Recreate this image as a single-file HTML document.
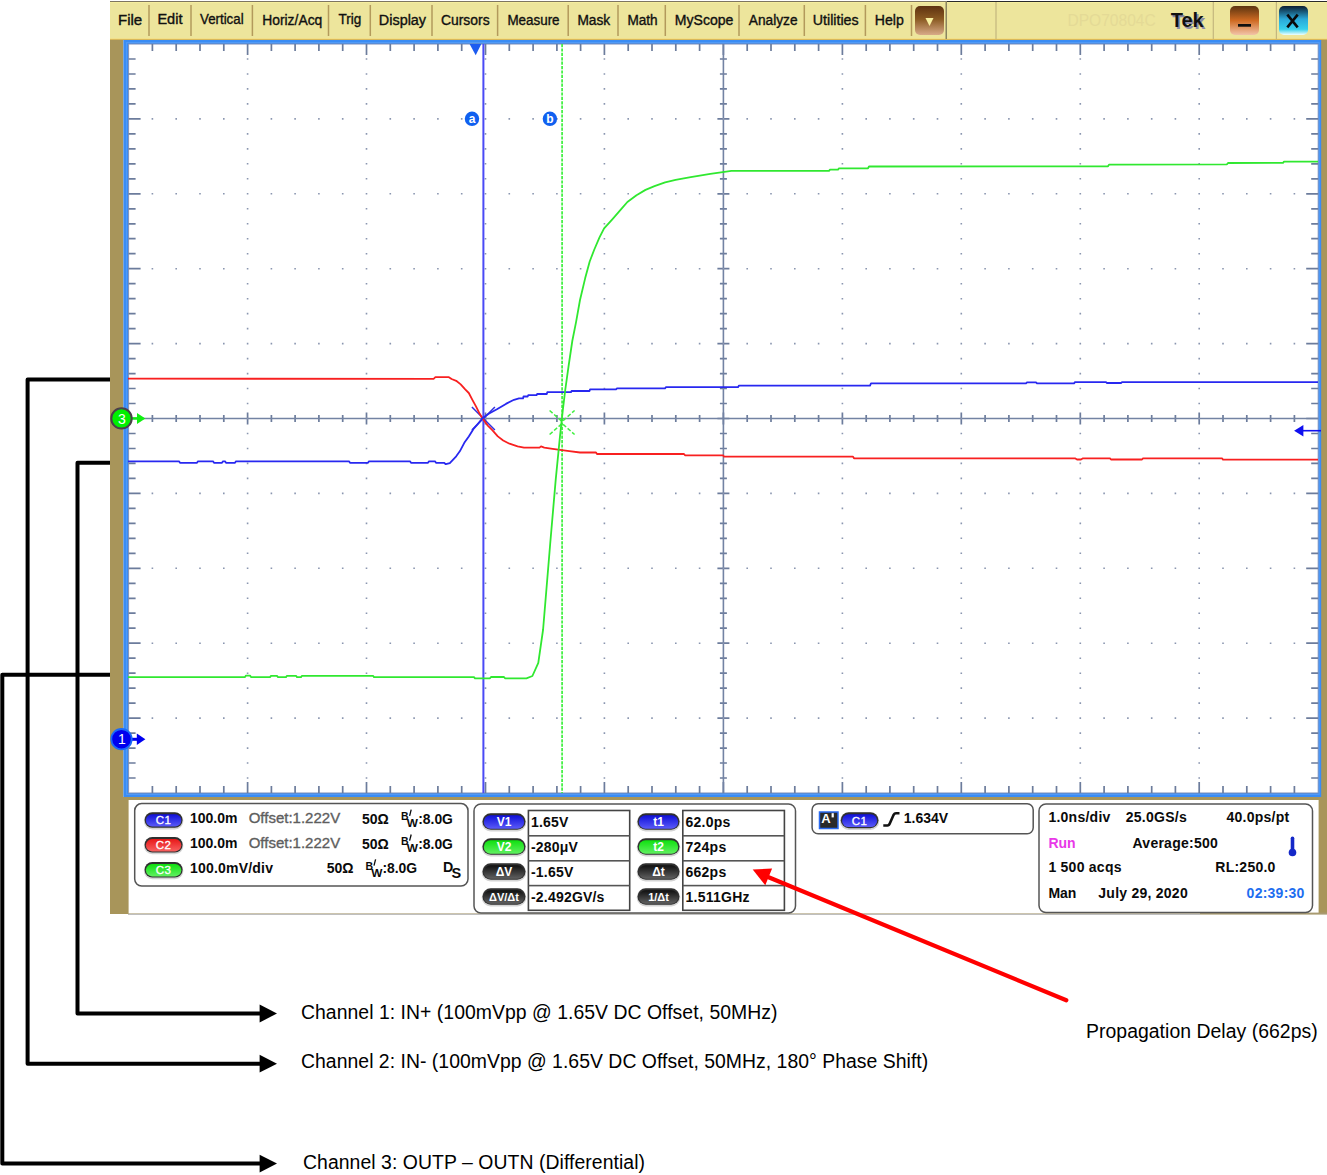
<!DOCTYPE html>
<html><head><meta charset="utf-8"><style>
html,body{margin:0;padding:0;background:#fff;width:1327px;height:1175px;overflow:hidden}
svg{display:block;font-family:"Liberation Sans", sans-serif}
</style></head><body>
<svg width="1327" height="1175" viewBox="0 0 1327 1175">
<rect x="110" y="1" width="1217" height="913" fill="#ffffff"/>
<rect x="110" y="1" width="836" height="1" fill="#7d7560"/><rect x="946" y="1" width="381" height="1.3" fill="#2a2a2a"/>
<rect x="110" y="2" width="1217" height="37" fill="#ede59c"/>
<rect x="110" y="2" width="1217" height="1" fill="#f6ee9e"/>
<rect x="110" y="38" width="1217" height="1" fill="#f2e08a"/>
<rect x="110" y="39" width="1217" height="1" fill="#d9b85a"/>
<rect x="110" y="40" width="13.4" height="874" fill="#a8955a"/>
<rect x="1321" y="40" width="6" height="874" fill="#a8955a"/>
<rect x="110" y="797" width="1217" height="117" fill="#a8955a"/>
<rect x="128.6" y="800" width="1190" height="113.5" fill="#ffffff"/>
<rect x="128" y="913.8" width="1072" height="1" fill="#b0b0b0"/><rect x="1200" y="912.6" width="127" height="2" fill="#a89a70"/>
<rect x="123.4" y="40" width="1197.8" height="757" fill="#3a8cf4"/>
<rect x="128" y="44" width="1190.2" height="749" fill="#ffffff"/>
<rect x="128.6" y="44" width="1189.6" height="749" fill="none" stroke="#7a8cb8" stroke-width="1"/>
<rect x="126.6" y="42.6" width="1192.6" height="751.8" fill="none" stroke="#5ea2f8" stroke-width="1" opacity="0.7"/>
<rect x="995.40" y="2" width="1.2" height="37" fill="#c4b67e"/>
<rect x="1212.70" y="2" width="1.2" height="37" fill="#c4b67e"/>
<rect x="1275.80" y="2" width="1.2" height="37" fill="#c4b67e"/>
<rect x="148.25" y="5" width="1.5" height="31" fill="#b39a5c"/>
<rect x="190.25" y="5" width="1.5" height="31" fill="#b39a5c"/>
<rect x="251.65" y="5" width="1.5" height="31" fill="#b39a5c"/>
<rect x="327.75" y="5" width="1.5" height="31" fill="#b39a5c"/>
<rect x="369.55" y="5" width="1.5" height="31" fill="#b39a5c"/>
<rect x="431.25" y="5" width="1.5" height="31" fill="#b39a5c"/>
<rect x="496.85" y="5" width="1.5" height="31" fill="#b39a5c"/>
<rect x="567.45" y="5" width="1.5" height="31" fill="#b39a5c"/>
<rect x="617.25" y="5" width="1.5" height="31" fill="#b39a5c"/>
<rect x="664.55" y="5" width="1.5" height="31" fill="#b39a5c"/>
<rect x="738.25" y="5" width="1.5" height="31" fill="#b39a5c"/>
<rect x="803.55" y="5" width="1.5" height="31" fill="#b39a5c"/>
<rect x="864.65" y="5" width="1.5" height="31" fill="#b39a5c"/>
<rect x="910.75" y="5" width="1.5" height="31" fill="#b39a5c"/>
<rect x="945.5" y="1" width="1.5" height="38" fill="#8a8460"/>
<text x="118.0" y="25.3" font-size="13.8" fill="#101010" stroke="#101010" stroke-width="0.35" textLength="24.2" lengthAdjust="spacingAndGlyphs">File</text>
<text x="157.4" y="24.3" font-size="13.8" fill="#101010" stroke="#101010" stroke-width="0.35" textLength="25.099999999999998" lengthAdjust="spacingAndGlyphs">Edit</text>
<text x="200.0" y="24.3" font-size="13.8" fill="#101010" stroke="#101010" stroke-width="0.35" textLength="43.6" lengthAdjust="spacingAndGlyphs">Vertical</text>
<text x="262.2" y="25.3" font-size="13.8" fill="#101010" stroke="#101010" stroke-width="0.35" textLength="60.1" lengthAdjust="spacingAndGlyphs">Horiz/Acq</text>
<text x="338.4" y="24.3" font-size="13.8" fill="#101010" stroke="#101010" stroke-width="0.35" textLength="22.8" lengthAdjust="spacingAndGlyphs">Trig</text>
<text x="378.79999999999995" y="25.3" font-size="13.8" fill="#101010" stroke="#101010" stroke-width="0.35" textLength="47.300000000000004" lengthAdjust="spacingAndGlyphs">Display</text>
<text x="440.9" y="25.3" font-size="13.8" fill="#101010" stroke="#101010" stroke-width="0.35" textLength="48.7" lengthAdjust="spacingAndGlyphs">Cursors</text>
<text x="507.4" y="25.3" font-size="13.8" fill="#101010" stroke="#101010" stroke-width="0.35" textLength="52.2" lengthAdjust="spacingAndGlyphs">Measure</text>
<text x="577.4" y="25.3" font-size="13.8" fill="#101010" stroke="#101010" stroke-width="0.35" textLength="32.800000000000004" lengthAdjust="spacingAndGlyphs">Mask</text>
<text x="627.4" y="25.3" font-size="13.8" fill="#101010" stroke="#101010" stroke-width="0.35" textLength="30.2" lengthAdjust="spacingAndGlyphs">Math</text>
<text x="674.8" y="25.3" font-size="13.8" fill="#101010" stroke="#101010" stroke-width="0.35" textLength="58.6" lengthAdjust="spacingAndGlyphs">MyScope</text>
<text x="748.8" y="25.3" font-size="13.8" fill="#101010" stroke="#101010" stroke-width="0.35" textLength="48.7" lengthAdjust="spacingAndGlyphs">Analyze</text>
<text x="812.8" y="25.3" font-size="13.8" fill="#101010" stroke="#101010" stroke-width="0.35" textLength="45.800000000000004" lengthAdjust="spacingAndGlyphs">Utilities</text>
<text x="874.8" y="25.3" font-size="13.8" fill="#101010" stroke="#101010" stroke-width="0.35" textLength="29.0" lengthAdjust="spacingAndGlyphs">Help</text>
<defs><linearGradient id="gdrop" x1="0" y1="0" x2="0" y2="1"><stop offset="0" stop-color="#5e3210"/><stop offset="0.45" stop-color="#8a5a22"/><stop offset="1" stop-color="#d8aa88"/></linearGradient><linearGradient id="gmin" x1="0" y1="0" x2="0" y2="1"><stop offset="0" stop-color="#5a3410"/><stop offset="0.5" stop-color="#cf6a22"/><stop offset="1" stop-color="#f2c4a8"/></linearGradient><linearGradient id="gx" x1="0" y1="0" x2="0" y2="1"><stop offset="0" stop-color="#0c1c30"/><stop offset="0.45" stop-color="#2aa8d8"/><stop offset="0.8" stop-color="#36d0ec"/><stop offset="1" stop-color="#f0ffff"/></linearGradient><linearGradient id="gb1" x1="0" y1="0" x2="0" y2="1"><stop offset="0" stop-color="#1010d8"/><stop offset="1" stop-color="#5a5af8"/></linearGradient><linearGradient id="gb2" x1="0" y1="0" x2="0" y2="1"><stop offset="0" stop-color="#e81818"/><stop offset="1" stop-color="#f86060"/></linearGradient><linearGradient id="gb3" x1="0" y1="0" x2="0" y2="1"><stop offset="0" stop-color="#10e010"/><stop offset="1" stop-color="#60f060"/></linearGradient><linearGradient id="gbk" x1="0" y1="0" x2="0" y2="1"><stop offset="0" stop-color="#101010"/><stop offset="1" stop-color="#606060"/></linearGradient></defs>
<rect x="915" y="6" width="29" height="29" rx="5" fill="url(#gdrop)"/>
<path d="M925.5 18 L933.5 18 L929.5 26 Z" fill="#f8f0a0"/>
<text x="1067.4" y="26.4" font-size="15.6" fill="#e4da96">DPO70804C</text>
<text x="1172.3" y="28.8" font-size="20" font-weight="700" fill="#8a8aa8">Tek</text>
<text x="1170.7" y="27.3" font-size="20" font-weight="700" fill="#101010">Tek</text>
<rect x="1230" y="6" width="29" height="29" rx="5" fill="url(#gmin)"/>
<rect x="1238" y="24" width="13" height="2.7" fill="#101010"/>
<rect x="1279" y="6" width="29" height="29" rx="5" fill="url(#gx)"/>
<path d="M1287.3 14.7 L1297.7 27.3 M1297.7 14.7 L1287.3 27.3" stroke="#0a0a0a" stroke-width="2.6"/>
<path d="M152.4 44.0 v7 M152.4 793.0 v-7 M176.2 44.0 v7 M176.2 793.0 v-7 M200.0 44.0 v7 M200.0 793.0 v-7 M223.8 44.0 v7 M223.8 793.0 v-7 M247.6 44.0 v11 M247.6 793.0 v-11 M271.4 44.0 v7 M271.4 793.0 v-7 M295.1 44.0 v7 M295.1 793.0 v-7 M318.9 44.0 v7 M318.9 793.0 v-7 M342.7 44.0 v7 M342.7 793.0 v-7 M366.5 44.0 v11 M366.5 793.0 v-11 M390.3 44.0 v7 M390.3 793.0 v-7 M414.1 44.0 v7 M414.1 793.0 v-7 M437.9 44.0 v7 M437.9 793.0 v-7 M461.7 44.0 v7 M461.7 793.0 v-7 M485.5 44.0 v11 M485.5 793.0 v-11 M509.3 44.0 v7 M509.3 793.0 v-7 M533.1 44.0 v7 M533.1 793.0 v-7 M556.9 44.0 v7 M556.9 793.0 v-7 M580.6 44.0 v7 M580.6 793.0 v-7 M604.4 44.0 v11 M604.4 793.0 v-11 M628.2 44.0 v7 M628.2 793.0 v-7 M652.0 44.0 v7 M652.0 793.0 v-7 M675.8 44.0 v7 M675.8 793.0 v-7 M699.6 44.0 v7 M699.6 793.0 v-7 M723.4 44.0 v11 M723.4 793.0 v-11 M747.2 44.0 v7 M747.2 793.0 v-7 M771.0 44.0 v7 M771.0 793.0 v-7 M794.8 44.0 v7 M794.8 793.0 v-7 M818.6 44.0 v7 M818.6 793.0 v-7 M842.4 44.0 v11 M842.4 793.0 v-11 M866.2 44.0 v7 M866.2 793.0 v-7 M889.9 44.0 v7 M889.9 793.0 v-7 M913.7 44.0 v7 M913.7 793.0 v-7 M937.5 44.0 v7 M937.5 793.0 v-7 M961.3 44.0 v11 M961.3 793.0 v-11 M985.1 44.0 v7 M985.1 793.0 v-7 M1008.9 44.0 v7 M1008.9 793.0 v-7 M1032.7 44.0 v7 M1032.7 793.0 v-7 M1056.5 44.0 v7 M1056.5 793.0 v-7 M1080.3 44.0 v11 M1080.3 793.0 v-11 M1104.1 44.0 v7 M1104.1 793.0 v-7 M1127.9 44.0 v7 M1127.9 793.0 v-7 M1151.7 44.0 v7 M1151.7 793.0 v-7 M1175.4 44.0 v7 M1175.4 793.0 v-7 M1199.2 44.0 v11 M1199.2 793.0 v-11 M1223.0 44.0 v7 M1223.0 793.0 v-7 M1246.8 44.0 v7 M1246.8 793.0 v-7 M1270.6 44.0 v7 M1270.6 793.0 v-7 M1294.4 44.0 v7 M1294.4 793.0 v-7 M128.6 59.0 h7 M1318.2 59.0 h-7 M128.6 74.0 h7 M1318.2 74.0 h-7 M128.6 88.9 h7 M1318.2 88.9 h-7 M128.6 103.9 h7 M1318.2 103.9 h-7 M128.6 118.9 h12 M1318.2 118.9 h-12 M128.6 133.9 h7 M1318.2 133.9 h-7 M128.6 148.9 h7 M1318.2 148.9 h-7 M128.6 163.8 h7 M1318.2 163.8 h-7 M128.6 178.8 h7 M1318.2 178.8 h-7 M128.6 193.8 h12 M1318.2 193.8 h-12 M128.6 208.8 h7 M1318.2 208.8 h-7 M128.6 223.8 h7 M1318.2 223.8 h-7 M128.6 238.7 h7 M1318.2 238.7 h-7 M128.6 253.7 h7 M1318.2 253.7 h-7 M128.6 268.7 h12 M1318.2 268.7 h-12 M128.6 283.7 h7 M1318.2 283.7 h-7 M128.6 298.7 h7 M1318.2 298.7 h-7 M128.6 313.6 h7 M1318.2 313.6 h-7 M128.6 328.6 h7 M1318.2 328.6 h-7 M128.6 343.6 h12 M1318.2 343.6 h-12 M128.6 358.6 h7 M1318.2 358.6 h-7 M128.6 373.6 h7 M1318.2 373.6 h-7 M128.6 388.5 h7 M1318.2 388.5 h-7 M128.6 403.5 h7 M1318.2 403.5 h-7 M128.6 418.5 h12 M1318.2 418.5 h-12 M128.6 433.5 h7 M1318.2 433.5 h-7 M128.6 448.5 h7 M1318.2 448.5 h-7 M128.6 463.4 h7 M1318.2 463.4 h-7 M128.6 478.4 h7 M1318.2 478.4 h-7 M128.6 493.4 h12 M1318.2 493.4 h-12 M128.6 508.4 h7 M1318.2 508.4 h-7 M128.6 523.4 h7 M1318.2 523.4 h-7 M128.6 538.3 h7 M1318.2 538.3 h-7 M128.6 553.3 h7 M1318.2 553.3 h-7 M128.6 568.3 h12 M1318.2 568.3 h-12 M128.6 583.3 h7 M1318.2 583.3 h-7 M128.6 598.3 h7 M1318.2 598.3 h-7 M128.6 613.2 h7 M1318.2 613.2 h-7 M128.6 628.2 h7 M1318.2 628.2 h-7 M128.6 643.2 h12 M1318.2 643.2 h-12 M128.6 658.2 h7 M1318.2 658.2 h-7 M128.6 673.2 h7 M1318.2 673.2 h-7 M128.6 688.1 h7 M1318.2 688.1 h-7 M128.6 703.1 h7 M1318.2 703.1 h-7 M128.6 718.1 h12 M1318.2 718.1 h-12 M128.6 733.1 h7 M1318.2 733.1 h-7 M128.6 748.1 h7 M1318.2 748.1 h-7 M128.6 763.0 h7 M1318.2 763.0 h-7 M128.6 778.0 h7 M1318.2 778.0 h-7 M152.4 415.0 V422.0 M719.9 59.0 H726.9 M176.2 415.0 V422.0 M719.9 74.0 H726.9 M200.0 415.0 V422.0 M719.9 88.9 H726.9 M223.8 415.0 V422.0 M719.9 103.9 H726.9 M247.6 412.5 V424.5 M717.4 118.9 H729.4 M271.4 415.0 V422.0 M719.9 133.9 H726.9 M295.1 415.0 V422.0 M719.9 148.9 H726.9 M318.9 415.0 V422.0 M719.9 163.8 H726.9 M342.7 415.0 V422.0 M719.9 178.8 H726.9 M366.5 412.5 V424.5 M717.4 193.8 H729.4 M390.3 415.0 V422.0 M719.9 208.8 H726.9 M414.1 415.0 V422.0 M719.9 223.8 H726.9 M437.9 415.0 V422.0 M719.9 238.7 H726.9 M461.7 415.0 V422.0 M719.9 253.7 H726.9 M485.5 412.5 V424.5 M717.4 268.7 H729.4 M509.3 415.0 V422.0 M719.9 283.7 H726.9 M533.1 415.0 V422.0 M719.9 298.7 H726.9 M556.9 415.0 V422.0 M719.9 313.6 H726.9 M580.6 415.0 V422.0 M719.9 328.6 H726.9 M604.4 412.5 V424.5 M717.4 343.6 H729.4 M628.2 415.0 V422.0 M719.9 358.6 H726.9 M652.0 415.0 V422.0 M719.9 373.6 H726.9 M675.8 415.0 V422.0 M719.9 388.5 H726.9 M699.6 415.0 V422.0 M719.9 403.5 H726.9 M723.4 412.5 V424.5 M717.4 418.5 H729.4 M747.2 415.0 V422.0 M719.9 433.5 H726.9 M771.0 415.0 V422.0 M719.9 448.5 H726.9 M794.8 415.0 V422.0 M719.9 463.4 H726.9 M818.6 415.0 V422.0 M719.9 478.4 H726.9 M842.4 412.5 V424.5 M717.4 493.4 H729.4 M866.2 415.0 V422.0 M719.9 508.4 H726.9 M889.9 415.0 V422.0 M719.9 523.4 H726.9 M913.7 415.0 V422.0 M719.9 538.3 H726.9 M937.5 415.0 V422.0 M719.9 553.3 H726.9 M961.3 412.5 V424.5 M717.4 568.3 H729.4 M985.1 415.0 V422.0 M719.9 583.3 H726.9 M1008.9 415.0 V422.0 M719.9 598.3 H726.9 M1032.7 415.0 V422.0 M719.9 613.2 H726.9 M1056.5 415.0 V422.0 M719.9 628.2 H726.9 M1080.3 412.5 V424.5 M717.4 643.2 H729.4 M1104.1 415.0 V422.0 M719.9 658.2 H726.9 M1127.9 415.0 V422.0 M719.9 673.2 H726.9 M1151.7 415.0 V422.0 M719.9 688.1 H726.9 M1175.4 415.0 V422.0 M719.9 703.1 H726.9 M1199.2 412.5 V424.5 M717.4 718.1 H729.4 M1223.0 415.0 V422.0 M719.9 733.1 H726.9 M1246.8 415.0 V422.0 M719.9 748.1 H726.9 M1270.6 415.0 V422.0 M719.9 763.0 H726.9 M1294.4 415.0 V422.0 M719.9 778.0 H726.9" stroke="#6c7c9c" stroke-width="1.7" fill="none"/>
<path d="M128.6 418.5 H1318.2 M723.4 44.0 V793.0" stroke="#7383a3" stroke-width="1.6" fill="none"/>
<path d="M246.8 58.2h1.6v1.6h-1.6zM246.8 73.2h1.6v1.6h-1.6zM246.8 88.1h1.6v1.6h-1.6zM246.8 103.1h1.6v1.6h-1.6zM246.8 118.1h1.6v1.6h-1.6zM246.8 133.1h1.6v1.6h-1.6zM246.8 148.1h1.6v1.6h-1.6zM246.8 163.0h1.6v1.6h-1.6zM246.8 178.0h1.6v1.6h-1.6zM246.8 193.0h1.6v1.6h-1.6zM246.8 208.0h1.6v1.6h-1.6zM246.8 223.0h1.6v1.6h-1.6zM246.8 237.9h1.6v1.6h-1.6zM246.8 252.9h1.6v1.6h-1.6zM246.8 267.9h1.6v1.6h-1.6zM246.8 282.9h1.6v1.6h-1.6zM246.8 297.9h1.6v1.6h-1.6zM246.8 312.8h1.6v1.6h-1.6zM246.8 327.8h1.6v1.6h-1.6zM246.8 342.8h1.6v1.6h-1.6zM246.8 357.8h1.6v1.6h-1.6zM246.8 372.8h1.6v1.6h-1.6zM246.8 387.7h1.6v1.6h-1.6zM246.8 402.7h1.6v1.6h-1.6zM246.8 417.7h1.6v1.6h-1.6zM246.8 432.7h1.6v1.6h-1.6zM246.8 447.7h1.6v1.6h-1.6zM246.8 462.6h1.6v1.6h-1.6zM246.8 477.6h1.6v1.6h-1.6zM246.8 492.6h1.6v1.6h-1.6zM246.8 507.6h1.6v1.6h-1.6zM246.8 522.6h1.6v1.6h-1.6zM246.8 537.5h1.6v1.6h-1.6zM246.8 552.5h1.6v1.6h-1.6zM246.8 567.5h1.6v1.6h-1.6zM246.8 582.5h1.6v1.6h-1.6zM246.8 597.5h1.6v1.6h-1.6zM246.8 612.4h1.6v1.6h-1.6zM246.8 627.4h1.6v1.6h-1.6zM246.8 642.4h1.6v1.6h-1.6zM246.8 657.4h1.6v1.6h-1.6zM246.8 672.4h1.6v1.6h-1.6zM246.8 687.3h1.6v1.6h-1.6zM246.8 702.3h1.6v1.6h-1.6zM246.8 717.3h1.6v1.6h-1.6zM246.8 732.3h1.6v1.6h-1.6zM246.8 747.3h1.6v1.6h-1.6zM246.8 762.2h1.6v1.6h-1.6zM246.8 777.2h1.6v1.6h-1.6zM151.6 118.1h1.6v1.6h-1.6zM175.4 118.1h1.6v1.6h-1.6zM199.2 118.1h1.6v1.6h-1.6zM223.0 118.1h1.6v1.6h-1.6zM246.8 118.1h1.6v1.6h-1.6zM270.6 118.1h1.6v1.6h-1.6zM294.3 118.1h1.6v1.6h-1.6zM318.1 118.1h1.6v1.6h-1.6zM341.9 118.1h1.6v1.6h-1.6zM365.7 118.1h1.6v1.6h-1.6zM389.5 118.1h1.6v1.6h-1.6zM413.3 118.1h1.6v1.6h-1.6zM437.1 118.1h1.6v1.6h-1.6zM460.9 118.1h1.6v1.6h-1.6zM484.7 118.1h1.6v1.6h-1.6zM508.5 118.1h1.6v1.6h-1.6zM532.3 118.1h1.6v1.6h-1.6zM556.1 118.1h1.6v1.6h-1.6zM579.8 118.1h1.6v1.6h-1.6zM603.6 118.1h1.6v1.6h-1.6zM627.4 118.1h1.6v1.6h-1.6zM651.2 118.1h1.6v1.6h-1.6zM675.0 118.1h1.6v1.6h-1.6zM698.8 118.1h1.6v1.6h-1.6zM722.6 118.1h1.6v1.6h-1.6zM746.4 118.1h1.6v1.6h-1.6zM770.2 118.1h1.6v1.6h-1.6zM794.0 118.1h1.6v1.6h-1.6zM817.8 118.1h1.6v1.6h-1.6zM841.6 118.1h1.6v1.6h-1.6zM865.4 118.1h1.6v1.6h-1.6zM889.1 118.1h1.6v1.6h-1.6zM912.9 118.1h1.6v1.6h-1.6zM936.7 118.1h1.6v1.6h-1.6zM960.5 118.1h1.6v1.6h-1.6zM984.3 118.1h1.6v1.6h-1.6zM1008.1 118.1h1.6v1.6h-1.6zM1031.9 118.1h1.6v1.6h-1.6zM1055.7 118.1h1.6v1.6h-1.6zM1079.5 118.1h1.6v1.6h-1.6zM1103.3 118.1h1.6v1.6h-1.6zM1127.1 118.1h1.6v1.6h-1.6zM1150.9 118.1h1.6v1.6h-1.6zM1174.6 118.1h1.6v1.6h-1.6zM1198.4 118.1h1.6v1.6h-1.6zM1222.2 118.1h1.6v1.6h-1.6zM1246.0 118.1h1.6v1.6h-1.6zM1269.8 118.1h1.6v1.6h-1.6zM1293.6 118.1h1.6v1.6h-1.6zM365.7 58.2h1.6v1.6h-1.6zM365.7 73.2h1.6v1.6h-1.6zM365.7 88.1h1.6v1.6h-1.6zM365.7 103.1h1.6v1.6h-1.6zM365.7 118.1h1.6v1.6h-1.6zM365.7 133.1h1.6v1.6h-1.6zM365.7 148.1h1.6v1.6h-1.6zM365.7 163.0h1.6v1.6h-1.6zM365.7 178.0h1.6v1.6h-1.6zM365.7 193.0h1.6v1.6h-1.6zM365.7 208.0h1.6v1.6h-1.6zM365.7 223.0h1.6v1.6h-1.6zM365.7 237.9h1.6v1.6h-1.6zM365.7 252.9h1.6v1.6h-1.6zM365.7 267.9h1.6v1.6h-1.6zM365.7 282.9h1.6v1.6h-1.6zM365.7 297.9h1.6v1.6h-1.6zM365.7 312.8h1.6v1.6h-1.6zM365.7 327.8h1.6v1.6h-1.6zM365.7 342.8h1.6v1.6h-1.6zM365.7 357.8h1.6v1.6h-1.6zM365.7 372.8h1.6v1.6h-1.6zM365.7 387.7h1.6v1.6h-1.6zM365.7 402.7h1.6v1.6h-1.6zM365.7 417.7h1.6v1.6h-1.6zM365.7 432.7h1.6v1.6h-1.6zM365.7 447.7h1.6v1.6h-1.6zM365.7 462.6h1.6v1.6h-1.6zM365.7 477.6h1.6v1.6h-1.6zM365.7 492.6h1.6v1.6h-1.6zM365.7 507.6h1.6v1.6h-1.6zM365.7 522.6h1.6v1.6h-1.6zM365.7 537.5h1.6v1.6h-1.6zM365.7 552.5h1.6v1.6h-1.6zM365.7 567.5h1.6v1.6h-1.6zM365.7 582.5h1.6v1.6h-1.6zM365.7 597.5h1.6v1.6h-1.6zM365.7 612.4h1.6v1.6h-1.6zM365.7 627.4h1.6v1.6h-1.6zM365.7 642.4h1.6v1.6h-1.6zM365.7 657.4h1.6v1.6h-1.6zM365.7 672.4h1.6v1.6h-1.6zM365.7 687.3h1.6v1.6h-1.6zM365.7 702.3h1.6v1.6h-1.6zM365.7 717.3h1.6v1.6h-1.6zM365.7 732.3h1.6v1.6h-1.6zM365.7 747.3h1.6v1.6h-1.6zM365.7 762.2h1.6v1.6h-1.6zM365.7 777.2h1.6v1.6h-1.6zM151.6 193.0h1.6v1.6h-1.6zM175.4 193.0h1.6v1.6h-1.6zM199.2 193.0h1.6v1.6h-1.6zM223.0 193.0h1.6v1.6h-1.6zM246.8 193.0h1.6v1.6h-1.6zM270.6 193.0h1.6v1.6h-1.6zM294.3 193.0h1.6v1.6h-1.6zM318.1 193.0h1.6v1.6h-1.6zM341.9 193.0h1.6v1.6h-1.6zM365.7 193.0h1.6v1.6h-1.6zM389.5 193.0h1.6v1.6h-1.6zM413.3 193.0h1.6v1.6h-1.6zM437.1 193.0h1.6v1.6h-1.6zM460.9 193.0h1.6v1.6h-1.6zM484.7 193.0h1.6v1.6h-1.6zM508.5 193.0h1.6v1.6h-1.6zM532.3 193.0h1.6v1.6h-1.6zM556.1 193.0h1.6v1.6h-1.6zM579.8 193.0h1.6v1.6h-1.6zM603.6 193.0h1.6v1.6h-1.6zM627.4 193.0h1.6v1.6h-1.6zM651.2 193.0h1.6v1.6h-1.6zM675.0 193.0h1.6v1.6h-1.6zM698.8 193.0h1.6v1.6h-1.6zM722.6 193.0h1.6v1.6h-1.6zM746.4 193.0h1.6v1.6h-1.6zM770.2 193.0h1.6v1.6h-1.6zM794.0 193.0h1.6v1.6h-1.6zM817.8 193.0h1.6v1.6h-1.6zM841.6 193.0h1.6v1.6h-1.6zM865.4 193.0h1.6v1.6h-1.6zM889.1 193.0h1.6v1.6h-1.6zM912.9 193.0h1.6v1.6h-1.6zM936.7 193.0h1.6v1.6h-1.6zM960.5 193.0h1.6v1.6h-1.6zM984.3 193.0h1.6v1.6h-1.6zM1008.1 193.0h1.6v1.6h-1.6zM1031.9 193.0h1.6v1.6h-1.6zM1055.7 193.0h1.6v1.6h-1.6zM1079.5 193.0h1.6v1.6h-1.6zM1103.3 193.0h1.6v1.6h-1.6zM1127.1 193.0h1.6v1.6h-1.6zM1150.9 193.0h1.6v1.6h-1.6zM1174.6 193.0h1.6v1.6h-1.6zM1198.4 193.0h1.6v1.6h-1.6zM1222.2 193.0h1.6v1.6h-1.6zM1246.0 193.0h1.6v1.6h-1.6zM1269.8 193.0h1.6v1.6h-1.6zM1293.6 193.0h1.6v1.6h-1.6zM484.7 58.2h1.6v1.6h-1.6zM484.7 73.2h1.6v1.6h-1.6zM484.7 88.1h1.6v1.6h-1.6zM484.7 103.1h1.6v1.6h-1.6zM484.7 118.1h1.6v1.6h-1.6zM484.7 133.1h1.6v1.6h-1.6zM484.7 148.1h1.6v1.6h-1.6zM484.7 163.0h1.6v1.6h-1.6zM484.7 178.0h1.6v1.6h-1.6zM484.7 193.0h1.6v1.6h-1.6zM484.7 208.0h1.6v1.6h-1.6zM484.7 223.0h1.6v1.6h-1.6zM484.7 237.9h1.6v1.6h-1.6zM484.7 252.9h1.6v1.6h-1.6zM484.7 267.9h1.6v1.6h-1.6zM484.7 282.9h1.6v1.6h-1.6zM484.7 297.9h1.6v1.6h-1.6zM484.7 312.8h1.6v1.6h-1.6zM484.7 327.8h1.6v1.6h-1.6zM484.7 342.8h1.6v1.6h-1.6zM484.7 357.8h1.6v1.6h-1.6zM484.7 372.8h1.6v1.6h-1.6zM484.7 387.7h1.6v1.6h-1.6zM484.7 402.7h1.6v1.6h-1.6zM484.7 417.7h1.6v1.6h-1.6zM484.7 432.7h1.6v1.6h-1.6zM484.7 447.7h1.6v1.6h-1.6zM484.7 462.6h1.6v1.6h-1.6zM484.7 477.6h1.6v1.6h-1.6zM484.7 492.6h1.6v1.6h-1.6zM484.7 507.6h1.6v1.6h-1.6zM484.7 522.6h1.6v1.6h-1.6zM484.7 537.5h1.6v1.6h-1.6zM484.7 552.5h1.6v1.6h-1.6zM484.7 567.5h1.6v1.6h-1.6zM484.7 582.5h1.6v1.6h-1.6zM484.7 597.5h1.6v1.6h-1.6zM484.7 612.4h1.6v1.6h-1.6zM484.7 627.4h1.6v1.6h-1.6zM484.7 642.4h1.6v1.6h-1.6zM484.7 657.4h1.6v1.6h-1.6zM484.7 672.4h1.6v1.6h-1.6zM484.7 687.3h1.6v1.6h-1.6zM484.7 702.3h1.6v1.6h-1.6zM484.7 717.3h1.6v1.6h-1.6zM484.7 732.3h1.6v1.6h-1.6zM484.7 747.3h1.6v1.6h-1.6zM484.7 762.2h1.6v1.6h-1.6zM484.7 777.2h1.6v1.6h-1.6zM151.6 267.9h1.6v1.6h-1.6zM175.4 267.9h1.6v1.6h-1.6zM199.2 267.9h1.6v1.6h-1.6zM223.0 267.9h1.6v1.6h-1.6zM246.8 267.9h1.6v1.6h-1.6zM270.6 267.9h1.6v1.6h-1.6zM294.3 267.9h1.6v1.6h-1.6zM318.1 267.9h1.6v1.6h-1.6zM341.9 267.9h1.6v1.6h-1.6zM365.7 267.9h1.6v1.6h-1.6zM389.5 267.9h1.6v1.6h-1.6zM413.3 267.9h1.6v1.6h-1.6zM437.1 267.9h1.6v1.6h-1.6zM460.9 267.9h1.6v1.6h-1.6zM484.7 267.9h1.6v1.6h-1.6zM508.5 267.9h1.6v1.6h-1.6zM532.3 267.9h1.6v1.6h-1.6zM556.1 267.9h1.6v1.6h-1.6zM579.8 267.9h1.6v1.6h-1.6zM603.6 267.9h1.6v1.6h-1.6zM627.4 267.9h1.6v1.6h-1.6zM651.2 267.9h1.6v1.6h-1.6zM675.0 267.9h1.6v1.6h-1.6zM698.8 267.9h1.6v1.6h-1.6zM722.6 267.9h1.6v1.6h-1.6zM746.4 267.9h1.6v1.6h-1.6zM770.2 267.9h1.6v1.6h-1.6zM794.0 267.9h1.6v1.6h-1.6zM817.8 267.9h1.6v1.6h-1.6zM841.6 267.9h1.6v1.6h-1.6zM865.4 267.9h1.6v1.6h-1.6zM889.1 267.9h1.6v1.6h-1.6zM912.9 267.9h1.6v1.6h-1.6zM936.7 267.9h1.6v1.6h-1.6zM960.5 267.9h1.6v1.6h-1.6zM984.3 267.9h1.6v1.6h-1.6zM1008.1 267.9h1.6v1.6h-1.6zM1031.9 267.9h1.6v1.6h-1.6zM1055.7 267.9h1.6v1.6h-1.6zM1079.5 267.9h1.6v1.6h-1.6zM1103.3 267.9h1.6v1.6h-1.6zM1127.1 267.9h1.6v1.6h-1.6zM1150.9 267.9h1.6v1.6h-1.6zM1174.6 267.9h1.6v1.6h-1.6zM1198.4 267.9h1.6v1.6h-1.6zM1222.2 267.9h1.6v1.6h-1.6zM1246.0 267.9h1.6v1.6h-1.6zM1269.8 267.9h1.6v1.6h-1.6zM1293.6 267.9h1.6v1.6h-1.6zM603.6 58.2h1.6v1.6h-1.6zM603.6 73.2h1.6v1.6h-1.6zM603.6 88.1h1.6v1.6h-1.6zM603.6 103.1h1.6v1.6h-1.6zM603.6 118.1h1.6v1.6h-1.6zM603.6 133.1h1.6v1.6h-1.6zM603.6 148.1h1.6v1.6h-1.6zM603.6 163.0h1.6v1.6h-1.6zM603.6 178.0h1.6v1.6h-1.6zM603.6 193.0h1.6v1.6h-1.6zM603.6 208.0h1.6v1.6h-1.6zM603.6 223.0h1.6v1.6h-1.6zM603.6 237.9h1.6v1.6h-1.6zM603.6 252.9h1.6v1.6h-1.6zM603.6 267.9h1.6v1.6h-1.6zM603.6 282.9h1.6v1.6h-1.6zM603.6 297.9h1.6v1.6h-1.6zM603.6 312.8h1.6v1.6h-1.6zM603.6 327.8h1.6v1.6h-1.6zM603.6 342.8h1.6v1.6h-1.6zM603.6 357.8h1.6v1.6h-1.6zM603.6 372.8h1.6v1.6h-1.6zM603.6 387.7h1.6v1.6h-1.6zM603.6 402.7h1.6v1.6h-1.6zM603.6 417.7h1.6v1.6h-1.6zM603.6 432.7h1.6v1.6h-1.6zM603.6 447.7h1.6v1.6h-1.6zM603.6 462.6h1.6v1.6h-1.6zM603.6 477.6h1.6v1.6h-1.6zM603.6 492.6h1.6v1.6h-1.6zM603.6 507.6h1.6v1.6h-1.6zM603.6 522.6h1.6v1.6h-1.6zM603.6 537.5h1.6v1.6h-1.6zM603.6 552.5h1.6v1.6h-1.6zM603.6 567.5h1.6v1.6h-1.6zM603.6 582.5h1.6v1.6h-1.6zM603.6 597.5h1.6v1.6h-1.6zM603.6 612.4h1.6v1.6h-1.6zM603.6 627.4h1.6v1.6h-1.6zM603.6 642.4h1.6v1.6h-1.6zM603.6 657.4h1.6v1.6h-1.6zM603.6 672.4h1.6v1.6h-1.6zM603.6 687.3h1.6v1.6h-1.6zM603.6 702.3h1.6v1.6h-1.6zM603.6 717.3h1.6v1.6h-1.6zM603.6 732.3h1.6v1.6h-1.6zM603.6 747.3h1.6v1.6h-1.6zM603.6 762.2h1.6v1.6h-1.6zM603.6 777.2h1.6v1.6h-1.6zM151.6 342.8h1.6v1.6h-1.6zM175.4 342.8h1.6v1.6h-1.6zM199.2 342.8h1.6v1.6h-1.6zM223.0 342.8h1.6v1.6h-1.6zM246.8 342.8h1.6v1.6h-1.6zM270.6 342.8h1.6v1.6h-1.6zM294.3 342.8h1.6v1.6h-1.6zM318.1 342.8h1.6v1.6h-1.6zM341.9 342.8h1.6v1.6h-1.6zM365.7 342.8h1.6v1.6h-1.6zM389.5 342.8h1.6v1.6h-1.6zM413.3 342.8h1.6v1.6h-1.6zM437.1 342.8h1.6v1.6h-1.6zM460.9 342.8h1.6v1.6h-1.6zM484.7 342.8h1.6v1.6h-1.6zM508.5 342.8h1.6v1.6h-1.6zM532.3 342.8h1.6v1.6h-1.6zM556.1 342.8h1.6v1.6h-1.6zM579.8 342.8h1.6v1.6h-1.6zM603.6 342.8h1.6v1.6h-1.6zM627.4 342.8h1.6v1.6h-1.6zM651.2 342.8h1.6v1.6h-1.6zM675.0 342.8h1.6v1.6h-1.6zM698.8 342.8h1.6v1.6h-1.6zM722.6 342.8h1.6v1.6h-1.6zM746.4 342.8h1.6v1.6h-1.6zM770.2 342.8h1.6v1.6h-1.6zM794.0 342.8h1.6v1.6h-1.6zM817.8 342.8h1.6v1.6h-1.6zM841.6 342.8h1.6v1.6h-1.6zM865.4 342.8h1.6v1.6h-1.6zM889.1 342.8h1.6v1.6h-1.6zM912.9 342.8h1.6v1.6h-1.6zM936.7 342.8h1.6v1.6h-1.6zM960.5 342.8h1.6v1.6h-1.6zM984.3 342.8h1.6v1.6h-1.6zM1008.1 342.8h1.6v1.6h-1.6zM1031.9 342.8h1.6v1.6h-1.6zM1055.7 342.8h1.6v1.6h-1.6zM1079.5 342.8h1.6v1.6h-1.6zM1103.3 342.8h1.6v1.6h-1.6zM1127.1 342.8h1.6v1.6h-1.6zM1150.9 342.8h1.6v1.6h-1.6zM1174.6 342.8h1.6v1.6h-1.6zM1198.4 342.8h1.6v1.6h-1.6zM1222.2 342.8h1.6v1.6h-1.6zM1246.0 342.8h1.6v1.6h-1.6zM1269.8 342.8h1.6v1.6h-1.6zM1293.6 342.8h1.6v1.6h-1.6zM841.6 58.2h1.6v1.6h-1.6zM841.6 73.2h1.6v1.6h-1.6zM841.6 88.1h1.6v1.6h-1.6zM841.6 103.1h1.6v1.6h-1.6zM841.6 118.1h1.6v1.6h-1.6zM841.6 133.1h1.6v1.6h-1.6zM841.6 148.1h1.6v1.6h-1.6zM841.6 163.0h1.6v1.6h-1.6zM841.6 178.0h1.6v1.6h-1.6zM841.6 193.0h1.6v1.6h-1.6zM841.6 208.0h1.6v1.6h-1.6zM841.6 223.0h1.6v1.6h-1.6zM841.6 237.9h1.6v1.6h-1.6zM841.6 252.9h1.6v1.6h-1.6zM841.6 267.9h1.6v1.6h-1.6zM841.6 282.9h1.6v1.6h-1.6zM841.6 297.9h1.6v1.6h-1.6zM841.6 312.8h1.6v1.6h-1.6zM841.6 327.8h1.6v1.6h-1.6zM841.6 342.8h1.6v1.6h-1.6zM841.6 357.8h1.6v1.6h-1.6zM841.6 372.8h1.6v1.6h-1.6zM841.6 387.7h1.6v1.6h-1.6zM841.6 402.7h1.6v1.6h-1.6zM841.6 417.7h1.6v1.6h-1.6zM841.6 432.7h1.6v1.6h-1.6zM841.6 447.7h1.6v1.6h-1.6zM841.6 462.6h1.6v1.6h-1.6zM841.6 477.6h1.6v1.6h-1.6zM841.6 492.6h1.6v1.6h-1.6zM841.6 507.6h1.6v1.6h-1.6zM841.6 522.6h1.6v1.6h-1.6zM841.6 537.5h1.6v1.6h-1.6zM841.6 552.5h1.6v1.6h-1.6zM841.6 567.5h1.6v1.6h-1.6zM841.6 582.5h1.6v1.6h-1.6zM841.6 597.5h1.6v1.6h-1.6zM841.6 612.4h1.6v1.6h-1.6zM841.6 627.4h1.6v1.6h-1.6zM841.6 642.4h1.6v1.6h-1.6zM841.6 657.4h1.6v1.6h-1.6zM841.6 672.4h1.6v1.6h-1.6zM841.6 687.3h1.6v1.6h-1.6zM841.6 702.3h1.6v1.6h-1.6zM841.6 717.3h1.6v1.6h-1.6zM841.6 732.3h1.6v1.6h-1.6zM841.6 747.3h1.6v1.6h-1.6zM841.6 762.2h1.6v1.6h-1.6zM841.6 777.2h1.6v1.6h-1.6zM151.6 492.6h1.6v1.6h-1.6zM175.4 492.6h1.6v1.6h-1.6zM199.2 492.6h1.6v1.6h-1.6zM223.0 492.6h1.6v1.6h-1.6zM246.8 492.6h1.6v1.6h-1.6zM270.6 492.6h1.6v1.6h-1.6zM294.3 492.6h1.6v1.6h-1.6zM318.1 492.6h1.6v1.6h-1.6zM341.9 492.6h1.6v1.6h-1.6zM365.7 492.6h1.6v1.6h-1.6zM389.5 492.6h1.6v1.6h-1.6zM413.3 492.6h1.6v1.6h-1.6zM437.1 492.6h1.6v1.6h-1.6zM460.9 492.6h1.6v1.6h-1.6zM484.7 492.6h1.6v1.6h-1.6zM508.5 492.6h1.6v1.6h-1.6zM532.3 492.6h1.6v1.6h-1.6zM556.1 492.6h1.6v1.6h-1.6zM579.8 492.6h1.6v1.6h-1.6zM603.6 492.6h1.6v1.6h-1.6zM627.4 492.6h1.6v1.6h-1.6zM651.2 492.6h1.6v1.6h-1.6zM675.0 492.6h1.6v1.6h-1.6zM698.8 492.6h1.6v1.6h-1.6zM722.6 492.6h1.6v1.6h-1.6zM746.4 492.6h1.6v1.6h-1.6zM770.2 492.6h1.6v1.6h-1.6zM794.0 492.6h1.6v1.6h-1.6zM817.8 492.6h1.6v1.6h-1.6zM841.6 492.6h1.6v1.6h-1.6zM865.4 492.6h1.6v1.6h-1.6zM889.1 492.6h1.6v1.6h-1.6zM912.9 492.6h1.6v1.6h-1.6zM936.7 492.6h1.6v1.6h-1.6zM960.5 492.6h1.6v1.6h-1.6zM984.3 492.6h1.6v1.6h-1.6zM1008.1 492.6h1.6v1.6h-1.6zM1031.9 492.6h1.6v1.6h-1.6zM1055.7 492.6h1.6v1.6h-1.6zM1079.5 492.6h1.6v1.6h-1.6zM1103.3 492.6h1.6v1.6h-1.6zM1127.1 492.6h1.6v1.6h-1.6zM1150.9 492.6h1.6v1.6h-1.6zM1174.6 492.6h1.6v1.6h-1.6zM1198.4 492.6h1.6v1.6h-1.6zM1222.2 492.6h1.6v1.6h-1.6zM1246.0 492.6h1.6v1.6h-1.6zM1269.8 492.6h1.6v1.6h-1.6zM1293.6 492.6h1.6v1.6h-1.6zM960.5 58.2h1.6v1.6h-1.6zM960.5 73.2h1.6v1.6h-1.6zM960.5 88.1h1.6v1.6h-1.6zM960.5 103.1h1.6v1.6h-1.6zM960.5 118.1h1.6v1.6h-1.6zM960.5 133.1h1.6v1.6h-1.6zM960.5 148.1h1.6v1.6h-1.6zM960.5 163.0h1.6v1.6h-1.6zM960.5 178.0h1.6v1.6h-1.6zM960.5 193.0h1.6v1.6h-1.6zM960.5 208.0h1.6v1.6h-1.6zM960.5 223.0h1.6v1.6h-1.6zM960.5 237.9h1.6v1.6h-1.6zM960.5 252.9h1.6v1.6h-1.6zM960.5 267.9h1.6v1.6h-1.6zM960.5 282.9h1.6v1.6h-1.6zM960.5 297.9h1.6v1.6h-1.6zM960.5 312.8h1.6v1.6h-1.6zM960.5 327.8h1.6v1.6h-1.6zM960.5 342.8h1.6v1.6h-1.6zM960.5 357.8h1.6v1.6h-1.6zM960.5 372.8h1.6v1.6h-1.6zM960.5 387.7h1.6v1.6h-1.6zM960.5 402.7h1.6v1.6h-1.6zM960.5 417.7h1.6v1.6h-1.6zM960.5 432.7h1.6v1.6h-1.6zM960.5 447.7h1.6v1.6h-1.6zM960.5 462.6h1.6v1.6h-1.6zM960.5 477.6h1.6v1.6h-1.6zM960.5 492.6h1.6v1.6h-1.6zM960.5 507.6h1.6v1.6h-1.6zM960.5 522.6h1.6v1.6h-1.6zM960.5 537.5h1.6v1.6h-1.6zM960.5 552.5h1.6v1.6h-1.6zM960.5 567.5h1.6v1.6h-1.6zM960.5 582.5h1.6v1.6h-1.6zM960.5 597.5h1.6v1.6h-1.6zM960.5 612.4h1.6v1.6h-1.6zM960.5 627.4h1.6v1.6h-1.6zM960.5 642.4h1.6v1.6h-1.6zM960.5 657.4h1.6v1.6h-1.6zM960.5 672.4h1.6v1.6h-1.6zM960.5 687.3h1.6v1.6h-1.6zM960.5 702.3h1.6v1.6h-1.6zM960.5 717.3h1.6v1.6h-1.6zM960.5 732.3h1.6v1.6h-1.6zM960.5 747.3h1.6v1.6h-1.6zM960.5 762.2h1.6v1.6h-1.6zM960.5 777.2h1.6v1.6h-1.6zM151.6 567.5h1.6v1.6h-1.6zM175.4 567.5h1.6v1.6h-1.6zM199.2 567.5h1.6v1.6h-1.6zM223.0 567.5h1.6v1.6h-1.6zM246.8 567.5h1.6v1.6h-1.6zM270.6 567.5h1.6v1.6h-1.6zM294.3 567.5h1.6v1.6h-1.6zM318.1 567.5h1.6v1.6h-1.6zM341.9 567.5h1.6v1.6h-1.6zM365.7 567.5h1.6v1.6h-1.6zM389.5 567.5h1.6v1.6h-1.6zM413.3 567.5h1.6v1.6h-1.6zM437.1 567.5h1.6v1.6h-1.6zM460.9 567.5h1.6v1.6h-1.6zM484.7 567.5h1.6v1.6h-1.6zM508.5 567.5h1.6v1.6h-1.6zM532.3 567.5h1.6v1.6h-1.6zM556.1 567.5h1.6v1.6h-1.6zM579.8 567.5h1.6v1.6h-1.6zM603.6 567.5h1.6v1.6h-1.6zM627.4 567.5h1.6v1.6h-1.6zM651.2 567.5h1.6v1.6h-1.6zM675.0 567.5h1.6v1.6h-1.6zM698.8 567.5h1.6v1.6h-1.6zM722.6 567.5h1.6v1.6h-1.6zM746.4 567.5h1.6v1.6h-1.6zM770.2 567.5h1.6v1.6h-1.6zM794.0 567.5h1.6v1.6h-1.6zM817.8 567.5h1.6v1.6h-1.6zM841.6 567.5h1.6v1.6h-1.6zM865.4 567.5h1.6v1.6h-1.6zM889.1 567.5h1.6v1.6h-1.6zM912.9 567.5h1.6v1.6h-1.6zM936.7 567.5h1.6v1.6h-1.6zM960.5 567.5h1.6v1.6h-1.6zM984.3 567.5h1.6v1.6h-1.6zM1008.1 567.5h1.6v1.6h-1.6zM1031.9 567.5h1.6v1.6h-1.6zM1055.7 567.5h1.6v1.6h-1.6zM1079.5 567.5h1.6v1.6h-1.6zM1103.3 567.5h1.6v1.6h-1.6zM1127.1 567.5h1.6v1.6h-1.6zM1150.9 567.5h1.6v1.6h-1.6zM1174.6 567.5h1.6v1.6h-1.6zM1198.4 567.5h1.6v1.6h-1.6zM1222.2 567.5h1.6v1.6h-1.6zM1246.0 567.5h1.6v1.6h-1.6zM1269.8 567.5h1.6v1.6h-1.6zM1293.6 567.5h1.6v1.6h-1.6zM1079.5 58.2h1.6v1.6h-1.6zM1079.5 73.2h1.6v1.6h-1.6zM1079.5 88.1h1.6v1.6h-1.6zM1079.5 103.1h1.6v1.6h-1.6zM1079.5 118.1h1.6v1.6h-1.6zM1079.5 133.1h1.6v1.6h-1.6zM1079.5 148.1h1.6v1.6h-1.6zM1079.5 163.0h1.6v1.6h-1.6zM1079.5 178.0h1.6v1.6h-1.6zM1079.5 193.0h1.6v1.6h-1.6zM1079.5 208.0h1.6v1.6h-1.6zM1079.5 223.0h1.6v1.6h-1.6zM1079.5 237.9h1.6v1.6h-1.6zM1079.5 252.9h1.6v1.6h-1.6zM1079.5 267.9h1.6v1.6h-1.6zM1079.5 282.9h1.6v1.6h-1.6zM1079.5 297.9h1.6v1.6h-1.6zM1079.5 312.8h1.6v1.6h-1.6zM1079.5 327.8h1.6v1.6h-1.6zM1079.5 342.8h1.6v1.6h-1.6zM1079.5 357.8h1.6v1.6h-1.6zM1079.5 372.8h1.6v1.6h-1.6zM1079.5 387.7h1.6v1.6h-1.6zM1079.5 402.7h1.6v1.6h-1.6zM1079.5 417.7h1.6v1.6h-1.6zM1079.5 432.7h1.6v1.6h-1.6zM1079.5 447.7h1.6v1.6h-1.6zM1079.5 462.6h1.6v1.6h-1.6zM1079.5 477.6h1.6v1.6h-1.6zM1079.5 492.6h1.6v1.6h-1.6zM1079.5 507.6h1.6v1.6h-1.6zM1079.5 522.6h1.6v1.6h-1.6zM1079.5 537.5h1.6v1.6h-1.6zM1079.5 552.5h1.6v1.6h-1.6zM1079.5 567.5h1.6v1.6h-1.6zM1079.5 582.5h1.6v1.6h-1.6zM1079.5 597.5h1.6v1.6h-1.6zM1079.5 612.4h1.6v1.6h-1.6zM1079.5 627.4h1.6v1.6h-1.6zM1079.5 642.4h1.6v1.6h-1.6zM1079.5 657.4h1.6v1.6h-1.6zM1079.5 672.4h1.6v1.6h-1.6zM1079.5 687.3h1.6v1.6h-1.6zM1079.5 702.3h1.6v1.6h-1.6zM1079.5 717.3h1.6v1.6h-1.6zM1079.5 732.3h1.6v1.6h-1.6zM1079.5 747.3h1.6v1.6h-1.6zM1079.5 762.2h1.6v1.6h-1.6zM1079.5 777.2h1.6v1.6h-1.6zM151.6 642.4h1.6v1.6h-1.6zM175.4 642.4h1.6v1.6h-1.6zM199.2 642.4h1.6v1.6h-1.6zM223.0 642.4h1.6v1.6h-1.6zM246.8 642.4h1.6v1.6h-1.6zM270.6 642.4h1.6v1.6h-1.6zM294.3 642.4h1.6v1.6h-1.6zM318.1 642.4h1.6v1.6h-1.6zM341.9 642.4h1.6v1.6h-1.6zM365.7 642.4h1.6v1.6h-1.6zM389.5 642.4h1.6v1.6h-1.6zM413.3 642.4h1.6v1.6h-1.6zM437.1 642.4h1.6v1.6h-1.6zM460.9 642.4h1.6v1.6h-1.6zM484.7 642.4h1.6v1.6h-1.6zM508.5 642.4h1.6v1.6h-1.6zM532.3 642.4h1.6v1.6h-1.6zM556.1 642.4h1.6v1.6h-1.6zM579.8 642.4h1.6v1.6h-1.6zM603.6 642.4h1.6v1.6h-1.6zM627.4 642.4h1.6v1.6h-1.6zM651.2 642.4h1.6v1.6h-1.6zM675.0 642.4h1.6v1.6h-1.6zM698.8 642.4h1.6v1.6h-1.6zM722.6 642.4h1.6v1.6h-1.6zM746.4 642.4h1.6v1.6h-1.6zM770.2 642.4h1.6v1.6h-1.6zM794.0 642.4h1.6v1.6h-1.6zM817.8 642.4h1.6v1.6h-1.6zM841.6 642.4h1.6v1.6h-1.6zM865.4 642.4h1.6v1.6h-1.6zM889.1 642.4h1.6v1.6h-1.6zM912.9 642.4h1.6v1.6h-1.6zM936.7 642.4h1.6v1.6h-1.6zM960.5 642.4h1.6v1.6h-1.6zM984.3 642.4h1.6v1.6h-1.6zM1008.1 642.4h1.6v1.6h-1.6zM1031.9 642.4h1.6v1.6h-1.6zM1055.7 642.4h1.6v1.6h-1.6zM1079.5 642.4h1.6v1.6h-1.6zM1103.3 642.4h1.6v1.6h-1.6zM1127.1 642.4h1.6v1.6h-1.6zM1150.9 642.4h1.6v1.6h-1.6zM1174.6 642.4h1.6v1.6h-1.6zM1198.4 642.4h1.6v1.6h-1.6zM1222.2 642.4h1.6v1.6h-1.6zM1246.0 642.4h1.6v1.6h-1.6zM1269.8 642.4h1.6v1.6h-1.6zM1293.6 642.4h1.6v1.6h-1.6zM1198.4 58.2h1.6v1.6h-1.6zM1198.4 73.2h1.6v1.6h-1.6zM1198.4 88.1h1.6v1.6h-1.6zM1198.4 103.1h1.6v1.6h-1.6zM1198.4 118.1h1.6v1.6h-1.6zM1198.4 133.1h1.6v1.6h-1.6zM1198.4 148.1h1.6v1.6h-1.6zM1198.4 163.0h1.6v1.6h-1.6zM1198.4 178.0h1.6v1.6h-1.6zM1198.4 193.0h1.6v1.6h-1.6zM1198.4 208.0h1.6v1.6h-1.6zM1198.4 223.0h1.6v1.6h-1.6zM1198.4 237.9h1.6v1.6h-1.6zM1198.4 252.9h1.6v1.6h-1.6zM1198.4 267.9h1.6v1.6h-1.6zM1198.4 282.9h1.6v1.6h-1.6zM1198.4 297.9h1.6v1.6h-1.6zM1198.4 312.8h1.6v1.6h-1.6zM1198.4 327.8h1.6v1.6h-1.6zM1198.4 342.8h1.6v1.6h-1.6zM1198.4 357.8h1.6v1.6h-1.6zM1198.4 372.8h1.6v1.6h-1.6zM1198.4 387.7h1.6v1.6h-1.6zM1198.4 402.7h1.6v1.6h-1.6zM1198.4 417.7h1.6v1.6h-1.6zM1198.4 432.7h1.6v1.6h-1.6zM1198.4 447.7h1.6v1.6h-1.6zM1198.4 462.6h1.6v1.6h-1.6zM1198.4 477.6h1.6v1.6h-1.6zM1198.4 492.6h1.6v1.6h-1.6zM1198.4 507.6h1.6v1.6h-1.6zM1198.4 522.6h1.6v1.6h-1.6zM1198.4 537.5h1.6v1.6h-1.6zM1198.4 552.5h1.6v1.6h-1.6zM1198.4 567.5h1.6v1.6h-1.6zM1198.4 582.5h1.6v1.6h-1.6zM1198.4 597.5h1.6v1.6h-1.6zM1198.4 612.4h1.6v1.6h-1.6zM1198.4 627.4h1.6v1.6h-1.6zM1198.4 642.4h1.6v1.6h-1.6zM1198.4 657.4h1.6v1.6h-1.6zM1198.4 672.4h1.6v1.6h-1.6zM1198.4 687.3h1.6v1.6h-1.6zM1198.4 702.3h1.6v1.6h-1.6zM1198.4 717.3h1.6v1.6h-1.6zM1198.4 732.3h1.6v1.6h-1.6zM1198.4 747.3h1.6v1.6h-1.6zM1198.4 762.2h1.6v1.6h-1.6zM1198.4 777.2h1.6v1.6h-1.6zM151.6 717.3h1.6v1.6h-1.6zM175.4 717.3h1.6v1.6h-1.6zM199.2 717.3h1.6v1.6h-1.6zM223.0 717.3h1.6v1.6h-1.6zM246.8 717.3h1.6v1.6h-1.6zM270.6 717.3h1.6v1.6h-1.6zM294.3 717.3h1.6v1.6h-1.6zM318.1 717.3h1.6v1.6h-1.6zM341.9 717.3h1.6v1.6h-1.6zM365.7 717.3h1.6v1.6h-1.6zM389.5 717.3h1.6v1.6h-1.6zM413.3 717.3h1.6v1.6h-1.6zM437.1 717.3h1.6v1.6h-1.6zM460.9 717.3h1.6v1.6h-1.6zM484.7 717.3h1.6v1.6h-1.6zM508.5 717.3h1.6v1.6h-1.6zM532.3 717.3h1.6v1.6h-1.6zM556.1 717.3h1.6v1.6h-1.6zM579.8 717.3h1.6v1.6h-1.6zM603.6 717.3h1.6v1.6h-1.6zM627.4 717.3h1.6v1.6h-1.6zM651.2 717.3h1.6v1.6h-1.6zM675.0 717.3h1.6v1.6h-1.6zM698.8 717.3h1.6v1.6h-1.6zM722.6 717.3h1.6v1.6h-1.6zM746.4 717.3h1.6v1.6h-1.6zM770.2 717.3h1.6v1.6h-1.6zM794.0 717.3h1.6v1.6h-1.6zM817.8 717.3h1.6v1.6h-1.6zM841.6 717.3h1.6v1.6h-1.6zM865.4 717.3h1.6v1.6h-1.6zM889.1 717.3h1.6v1.6h-1.6zM912.9 717.3h1.6v1.6h-1.6zM936.7 717.3h1.6v1.6h-1.6zM960.5 717.3h1.6v1.6h-1.6zM984.3 717.3h1.6v1.6h-1.6zM1008.1 717.3h1.6v1.6h-1.6zM1031.9 717.3h1.6v1.6h-1.6zM1055.7 717.3h1.6v1.6h-1.6zM1079.5 717.3h1.6v1.6h-1.6zM1103.3 717.3h1.6v1.6h-1.6zM1127.1 717.3h1.6v1.6h-1.6zM1150.9 717.3h1.6v1.6h-1.6zM1174.6 717.3h1.6v1.6h-1.6zM1198.4 717.3h1.6v1.6h-1.6zM1222.2 717.3h1.6v1.6h-1.6zM1246.0 717.3h1.6v1.6h-1.6zM1269.8 717.3h1.6v1.6h-1.6zM1293.6 717.3h1.6v1.6h-1.6z" fill="#8a96b0"/>
<rect x="482.4" y="44.0" width="2" height="749.0" fill="#4a4af6"/>
<line x1="562.1" y1="44.0" x2="562.1" y2="793.0" stroke="#48f048" stroke-width="1.8" stroke-dasharray="3.2 1.2"/>
<path d="M471.9 407.0 L494.9 430.0 M494.9 407.0 L471.9 430.0" stroke="#3030e0" stroke-width="1.5"/>
<path d="M549.6 410.5 L562.1 421.5 L574.6 410.5 M549.6 434.5 L562.1 423.5 L574.6 434.5" stroke="#40f040" stroke-width="1.5" stroke-dasharray="4 2" fill="none"/>
<polyline points="128.0,378.7 433.6,378.8 435.4,377.2 448.9,377.2 451.6,379.0 456.2,380.8 460.7,384.4 465.2,389.4 468.8,393.0 472.4,399.8 476.1,406.6 479.7,413.8 482.4,418.3 487.8,425.6 492.3,430.1 497.8,436.4 503.2,440.5 509.5,443.7 517.6,446.4 524.0,447.6 539.5,447.6 541.0,446.4 544.3,447.6 552.6,448.8 569.3,451.2 580.0,452.5 596.0,452.5 597.0,454.0 684.0,454.0 685.0,455.3 723.0,455.3 724.0,456.6 853.0,456.6 854.0,458.3 1075.0,458.3 1077.0,459.5 1081.0,459.5 1083.0,458.3 1110.0,458.3 1111.0,459.5 1142.0,459.5 1143.0,458.3 1222.0,458.3 1223.0,459.6 1318.0,459.6" fill="none" stroke="#f82020" stroke-width="1.8" stroke-linejoin="round"/>
<polyline points="128.0,461.3 179.0,461.3 180.0,462.8 197.0,462.8 198.0,461.3 213.0,461.3 214.0,462.8 222.0,462.8 223.0,461.3 225.0,461.3 226.0,462.8 235.0,462.8 236.0,461.3 349.0,461.3 350.0,462.8 368.0,462.8 369.0,461.3 410.0,461.3 411.0,462.8 428.0,462.8 429.0,461.3 435.0,461.3 436.0,462.8 444.0,462.8 445.8,464.2 449.8,463.1 456.2,456.3 459.8,451.3 464.3,442.8 468.8,436.4 473.3,429.2 477.9,423.8 482.4,418.3 488.7,413.8 496.9,409.3 505.9,403.9 514.0,399.8 519.0,398.4 523.0,398.4 523.5,396.5 527.7,396.5 528.2,395.2 536.6,395.2 537.1,394.0 546.8,394.0 547.3,392.2 571.0,392.2 571.5,391.0 589.5,391.0 590.0,389.4 616.0,389.4 617.0,388.3 665.0,388.3 666.0,387.2 738.0,387.2 739.0,385.6 870.0,385.6 871.0,383.4 1026.0,383.4 1027.0,382.3 1036.0,382.3 1037.0,383.4 1074.0,383.4 1075.0,382.1 1106.0,382.1 1107.0,383.0 1121.0,383.0 1122.0,382.1 1318.0,382.1" fill="none" stroke="#2828f0" stroke-width="1.8" stroke-linejoin="round"/>
<polyline points="128.0,677.1 245.0,677.1 246.0,675.6 250.0,675.6 251.0,677.1 270.0,677.1 271.0,675.9 277.0,675.9 278.0,677.1 286.0,677.1 287.0,675.8 296.0,675.8 297.0,677.1 301.0,677.1 302.0,675.8 373.0,675.8 374.0,677.1 474.0,677.1 475.0,678.3 490.0,678.3 491.0,677.0 504.0,677.0 505.0,678.3 526.4,678.3 532.4,676.0 538.3,662.9 543.1,629.5 550.2,543.8 555.7,479.8 559.8,438.1 562.7,411.2 565.3,389.5 568.5,366.6 572.3,341.0 576.1,321.9 580.0,300.0 585.2,278.1 589.7,261.5 594.3,249.5 599.5,237.4 604.1,228.4 612.3,219.3 621.4,208.8 627.4,202.0 636.5,195.2 645.5,189.9 654.5,186.2 665.1,182.4 675.6,179.8 690.7,177.1 699.8,175.6 710.3,173.8 720.9,172.3 731.4,170.8 829.0,170.8 830.0,169.6 838.0,169.6 839.0,168.3 868.0,168.3 869.0,166.5 1108.0,166.3 1109.0,164.6 1227.0,164.3 1228.0,163.0 1283.0,162.8 1284.0,161.6 1318.0,161.6" fill="none" stroke="#30e830" stroke-width="1.8" stroke-linejoin="round"/>
<path d="M469.6 44 L481.3 44 L475.7 55.2 Z" fill="#1c5cf0"/>
<circle cx="472" cy="118.8" r="7.2" fill="#1060f0"/>
<text x="472" y="123" font-size="12" font-weight="700" fill="#fff" text-anchor="middle">a</text>
<circle cx="549.9" cy="118.8" r="7.2" fill="#1060f0"/>
<text x="549.9" y="123" font-size="12" font-weight="700" fill="#fff" text-anchor="middle">b</text>
<path d="M1294.1 430.7 L1303.4 425 L1303.4 436.4 Z" fill="#1010f0"/><rect x="1302" y="429.9" width="19" height="1.6" fill="#1010f0"/>
<rect x="130" y="417.2" width="8" height="2.4" fill="#10f010"/><path d="M137 413.1 L145.4 418.5 L137 424.1 Z" fill="#10f010"/>
<circle cx="121.5" cy="418.4" r="10.2" fill="#00f000" stroke="#4a404a" stroke-width="2"/>
<text x="121.8" y="423.6" font-size="14" fill="#fff" text-anchor="middle">3</text>
<rect x="130" y="737.8" width="8" height="3" fill="#0000f0"/><path d="M136.8 733.5 L145.4 739.3 L136.8 745.1 Z" fill="#0000f0"/>
<circle cx="121.5" cy="739.2" r="10.2" fill="#0000ee" stroke="#1a6af8" stroke-width="1.8"/>
<text x="121.8" y="744.2" font-size="14" fill="#fff" text-anchor="middle">1</text>
<rect x="134.7" y="803.6" width="333.3" height="82.39999999999998" rx="7" fill="#ffffff" stroke="#555" stroke-width="1.5"/>
<rect x="474" y="804" width="321.5" height="109" rx="7" fill="#ffffff" stroke="#555" stroke-width="1.5"/>
<rect x="812.1" y="803.8" width="221.10000000000002" height="30.0" rx="6" fill="#ffffff" stroke="#555" stroke-width="1.5"/>
<rect x="1039" y="804" width="273.5" height="108.5" rx="7" fill="#ffffff" stroke="#555" stroke-width="1.5"/>
<rect x="143.79999999999998" y="812.5" width="39.6" height="16.9" rx="8.45" fill="#b8b8b8" opacity="0.6"/>
<rect x="144.6" y="812.2" width="38" height="15.5" rx="7.75" fill="#303030"/>
<rect x="145.9" y="814.3000000000001" width="35.4" height="12.3" rx="6.15" fill="url(#gb1)"/>
<text x="163.6" y="824.25" font-size="11.5" font-weight="400" fill="#fff" stroke="#fff" stroke-width="0.3" text-anchor="middle" letter-spacing="0.6">C1</text>
<rect x="143.79999999999998" y="837.3" width="39.6" height="16.9" rx="8.45" fill="#b8b8b8" opacity="0.6"/>
<rect x="144.6" y="837" width="38" height="15.5" rx="7.75" fill="#303030"/>
<rect x="145.9" y="839.1" width="35.4" height="12.3" rx="6.15" fill="url(#gb2)"/>
<text x="163.6" y="849.05" font-size="11.5" font-weight="400" fill="#fff" stroke="#fff" stroke-width="0.3" text-anchor="middle" letter-spacing="0.6">C2</text>
<rect x="143.79999999999998" y="862.3" width="39.6" height="16.9" rx="8.45" fill="#b8b8b8" opacity="0.6"/>
<rect x="144.6" y="862" width="38" height="15.5" rx="7.75" fill="#303030"/>
<rect x="145.9" y="864.1" width="35.4" height="12.3" rx="6.15" fill="url(#gb3)"/>
<text x="163.6" y="874.05" font-size="11.5" font-weight="400" fill="#fff" stroke="#fff" stroke-width="0.3" text-anchor="middle" letter-spacing="0.6">C3</text>
<text x="190" y="823.4" font-size="14" font-weight="700" fill="#0a0a0a">100.0m</text>
<text x="248.7" y="823.4" font-size="15" fill="#5e5e5e" stroke="#5e5e5e" stroke-width="0.35">Offset:1.222V</text>
<text x="362" y="823.6999999999999" font-size="14" font-weight="700" fill="#0a0a0a">50Ω</text>
<text x="401" y="820.1" font-size="10.5" font-weight="700" fill="#0a0a0a">B</text>
<path d="M411.2 809.6 L409.6 815.8" stroke="#0a0a0a" stroke-width="1.3"/>
<text x="406.8" y="827.1999999999999" font-size="11.8" font-weight="700" fill="#0a0a0a">W</text>
<text x="418.2" y="823.6999999999999" font-size="13.9" font-weight="700" fill="#0a0a0a">:8.0G</text>
<text x="190" y="848.3" font-size="14" font-weight="700" fill="#0a0a0a">100.0m</text>
<text x="248.7" y="848.3" font-size="15" fill="#5e5e5e" stroke="#5e5e5e" stroke-width="0.35">Offset:1.222V</text>
<text x="362" y="848.5999999999999" font-size="14" font-weight="700" fill="#0a0a0a">50Ω</text>
<text x="401" y="845.0" font-size="10.5" font-weight="700" fill="#0a0a0a">B</text>
<path d="M411.2 834.5 L409.6 840.6999999999999" stroke="#0a0a0a" stroke-width="1.3"/>
<text x="406.8" y="852.0999999999999" font-size="11.8" font-weight="700" fill="#0a0a0a">W</text>
<text x="418.2" y="848.5999999999999" font-size="13.9" font-weight="700" fill="#0a0a0a">:8.0G</text>
<text x="190" y="872.8000000000001" font-size="14" font-weight="700" letter-spacing="0.2" fill="#0a0a0a">100.0mV/div</text>
<text x="326.7" y="872.8000000000001" font-size="14" font-weight="700" fill="#0a0a0a">50Ω</text>
<text x="365.4" y="869.9000000000001" font-size="10.5" font-weight="700" fill="#0a0a0a">B</text>
<path d="M375.59999999999997 859.4000000000001 L374.0 865.6" stroke="#0a0a0a" stroke-width="1.3"/>
<text x="371.2" y="877.0" font-size="11.8" font-weight="700" fill="#0a0a0a">W</text>
<text x="382.4" y="873.2" font-size="13.9" font-weight="700" fill="#0a0a0a">:8.0G</text>
<text x="442.9" y="871.8000000000001" font-size="14.2" font-weight="700" fill="#0a0a0a">D</text><text x="451.4" y="878.0" font-size="14.5" font-weight="700" fill="#0a0a0a">S</text>
<rect x="528.4" y="810.5" width="101.30000000000007" height="99.79999999999995" fill="#fff" stroke="#444" stroke-width="1.6"/>
<rect x="528.4" y="835.0" width="101.30000000000007" height="1.6" fill="#555"/>
<rect x="528.4" y="860.0" width="101.30000000000007" height="1.6" fill="#555"/>
<rect x="528.4" y="884.8000000000001" width="101.30000000000007" height="1.6" fill="#555"/>
<rect x="682.8" y="810.5" width="101.60000000000002" height="99.79999999999995" fill="#fff" stroke="#444" stroke-width="1.6"/>
<rect x="682.8" y="835.0" width="101.60000000000002" height="1.6" fill="#555"/>
<rect x="682.8" y="860.0" width="101.60000000000002" height="1.6" fill="#555"/>
<rect x="682.8" y="884.8000000000001" width="101.60000000000002" height="1.6" fill="#555"/>
<rect x="481.7" y="813.5" width="44.6" height="18.0" rx="9.0" fill="#b8b8b8" opacity="0.6"/>
<rect x="482.5" y="813.2" width="43" height="16.6" rx="8.3" fill="#303030"/>
<rect x="483.8" y="815.3000000000001" width="40.4" height="13.400000000000002" rx="6.700000000000001" fill="url(#gb1)"/>
<text x="504.0" y="826.0" font-size="12" font-weight="700" fill="#fff" text-anchor="middle">V1</text>
<rect x="636.7" y="813.5" width="43.6" height="18.0" rx="9.0" fill="#b8b8b8" opacity="0.6"/>
<rect x="637.5" y="813.2" width="42" height="16.6" rx="8.3" fill="#303030"/>
<rect x="638.8" y="815.3000000000001" width="39.4" height="13.400000000000002" rx="6.700000000000001" fill="url(#gb1)"/>
<text x="658.5" y="826.0" font-size="12" font-weight="700" fill="#fff" text-anchor="middle">t1</text>
<text x="531" y="826.5" font-size="14" font-weight="700" letter-spacing="0.2" fill="#0a0a0a">1.65V</text>
<text x="685.5" y="826.5" font-size="14" font-weight="700" letter-spacing="0.25" fill="#0a0a0a">62.0ps</text>
<rect x="481.7" y="838.5" width="44.6" height="18.0" rx="9.0" fill="#b8b8b8" opacity="0.6"/>
<rect x="482.5" y="838.2" width="43" height="16.6" rx="8.3" fill="#303030"/>
<rect x="483.8" y="840.3000000000001" width="40.4" height="13.400000000000002" rx="6.700000000000001" fill="url(#gb3)"/>
<text x="504.0" y="851.0" font-size="12" font-weight="700" fill="#fff" text-anchor="middle">V2</text>
<rect x="636.7" y="838.5" width="43.6" height="18.0" rx="9.0" fill="#b8b8b8" opacity="0.6"/>
<rect x="637.5" y="838.2" width="42" height="16.6" rx="8.3" fill="#303030"/>
<rect x="638.8" y="840.3000000000001" width="39.4" height="13.400000000000002" rx="6.700000000000001" fill="url(#gb3)"/>
<text x="658.5" y="851.0" font-size="12" font-weight="700" fill="#fff" text-anchor="middle">t2</text>
<text x="531" y="851.5" font-size="14" font-weight="700" letter-spacing="0.2" fill="#0a0a0a">-280μV</text>
<text x="685.5" y="851.5" font-size="14" font-weight="700" letter-spacing="0.25" fill="#0a0a0a">724ps</text>
<rect x="481.7" y="863.5" width="44.6" height="18.0" rx="9.0" fill="#b8b8b8" opacity="0.6"/>
<rect x="482.5" y="863.2" width="43" height="16.6" rx="8.3" fill="#303030"/>
<rect x="483.8" y="865.3000000000001" width="40.4" height="13.400000000000002" rx="6.700000000000001" fill="url(#gbk)"/>
<text x="504.0" y="876.0" font-size="12" font-weight="700" fill="#fff" text-anchor="middle">ΔV</text>
<rect x="636.7" y="863.5" width="43.6" height="18.0" rx="9.0" fill="#b8b8b8" opacity="0.6"/>
<rect x="637.5" y="863.2" width="42" height="16.6" rx="8.3" fill="#303030"/>
<rect x="638.8" y="865.3000000000001" width="39.4" height="13.400000000000002" rx="6.700000000000001" fill="url(#gbk)"/>
<text x="658.5" y="876.0" font-size="12" font-weight="700" fill="#fff" text-anchor="middle">Δt</text>
<text x="531" y="876.5" font-size="14" font-weight="700" letter-spacing="0.2" fill="#0a0a0a">-1.65V</text>
<text x="685.5" y="876.5" font-size="14" font-weight="700" letter-spacing="0.25" fill="#0a0a0a">662ps</text>
<rect x="481.7" y="888.5" width="44.6" height="18.0" rx="9.0" fill="#b8b8b8" opacity="0.6"/>
<rect x="482.5" y="888.2" width="43" height="16.6" rx="8.3" fill="#303030"/>
<rect x="483.8" y="890.3000000000001" width="40.4" height="13.400000000000002" rx="6.700000000000001" fill="url(#gbk)"/>
<text x="504.0" y="901.0" font-size="11" font-weight="700" fill="#fff" text-anchor="middle">ΔV/Δt</text>
<rect x="636.7" y="888.5" width="43.6" height="18.0" rx="9.0" fill="#b8b8b8" opacity="0.6"/>
<rect x="637.5" y="888.2" width="42" height="16.6" rx="8.3" fill="#303030"/>
<rect x="638.8" y="890.3000000000001" width="39.4" height="13.400000000000002" rx="6.700000000000001" fill="url(#gbk)"/>
<text x="658.5" y="901.0" font-size="11" font-weight="700" fill="#fff" text-anchor="middle">1/Δt</text>
<text x="531" y="901.5" font-size="14" font-weight="700" letter-spacing="0.2" fill="#0a0a0a">-2.492GV/s</text>
<text x="685.5" y="901.5" font-size="14" font-weight="700" letter-spacing="0.25" fill="#0a0a0a">1.511GHz</text>
<rect x="819.5" y="812" width="18.5" height="16.5" fill="#2a2a2a" stroke="#2a6af0" stroke-width="1.5"/>
<text x="821.3" y="823.2" font-size="13" font-weight="700" fill="#fff">A</text><rect x="831.6" y="813.2" width="2.2" height="4.2" fill="#fff"/>
<rect x="840.0" y="812.5" width="39.2" height="17.4" rx="8.7" fill="#b8b8b8" opacity="0.6"/>
<rect x="840.8" y="812.2" width="37.6" height="16" rx="8.0" fill="#303030"/>
<rect x="842.0999999999999" y="814.3000000000001" width="35.0" height="12.8" rx="6.4" fill="url(#gb1)"/>
<text x="859.5999999999999" y="824.5" font-size="11.5" font-weight="400" fill="#fff" stroke="#fff" stroke-width="0.3" text-anchor="middle" letter-spacing="0.6">C1</text>
<path d="M883.3 825.5 L887.5 825.5 Q889 825.5 890 823 L893.5 815 Q894.5 813.3 896 813.3 L899.5 813.3" stroke="#111" stroke-width="2.6" fill="none"/>
<text x="903.8" y="823.4" font-size="14" font-weight="700" fill="#0a0a0a">1.634V</text>
<text x="1048.4" y="822.3" font-size="14" font-weight="700" letter-spacing="0.25" fill="#0a0a0a">1.0ns/div</text>
<text x="1125.8" y="822.3" font-size="14" font-weight="700" letter-spacing="0.25" fill="#0a0a0a">25.0GS/s</text>
<text x="1226.5" y="822.3" font-size="14" font-weight="700" letter-spacing="0.25" fill="#0a0a0a">40.0ps/pt</text>
<text x="1048.4" y="847.6" font-size="14" font-weight="700" fill="#e838e8">Run</text>
<text x="1132.5" y="847.6" font-size="14" font-weight="700" letter-spacing="0.25" fill="#0a0a0a">Average:500</text>
<rect x="1290.7" y="836.4" width="3.6" height="15" rx="1.8" fill="#1428c8"/><circle cx="1292.5" cy="852.5" r="3.8" fill="#1428c8"/>
<text x="1048.4" y="872.2" font-size="14" font-weight="700" letter-spacing="0.25" fill="#0a0a0a">1 500 acqs</text>
<text x="1215.3" y="872.2" font-size="14" font-weight="700" letter-spacing="0.25" fill="#0a0a0a">RL:250.0</text>
<text x="1048.4" y="897.5" font-size="14" font-weight="700" fill="#0a0a0a">Man</text>
<text x="1098.3" y="897.5" font-size="14" font-weight="700" letter-spacing="0.25" fill="#0a0a0a">July 29, 2020</text>
<text x="1246.6" y="897.5" font-size="14" font-weight="700" letter-spacing="0.25" fill="#1e6ef0">02:39:30</text>
<path d="M110 379.4 H27.6 V1063.7 H262 M110 462.7 H77.5 V1013.5 H262 M110 674.7 H2.3 V1163.6 H262" stroke="#000" stroke-width="4" fill="none" stroke-linejoin="round"/>
<path d="M259.6 1004.6 L277 1013.5 L259.6 1022.4 Z" fill="#000"/>
<path d="M259.6 1054.8 L277 1063.7 L259.6 1072.6000000000001 Z" fill="#000"/>
<path d="M259.6 1154.6999999999998 L277 1163.6 L259.6 1172.5 Z" fill="#000"/>
<line x1="1066.3" y1="1000.2" x2="768" y2="877" stroke="#ff0000" stroke-width="4.2" stroke-linecap="round"/>
<path d="M752.7 869.5 L772.1 868.6 L765.3 885.3 Z" fill="#ff0000"/>
<text x="301" y="1019" font-size="19.4" fill="#000" textLength="476.5">Channel 1: IN+ (100mVpp @ 1.65V DC Offset, 50MHz)</text>
<text x="301" y="1068.3" font-size="19.4" fill="#000" textLength="627.2">Channel 2: IN- (100mVpp @ 1.65V DC Offset, 50MHz, 180° Phase Shift)</text>
<text x="303" y="1169.2" font-size="19.4" fill="#000" textLength="342">Channel 3: OUTP – OUTN (Differential)</text>
<text x="1086" y="1037.8" font-size="19.4" fill="#000" textLength="231.7">Propagation Delay (662ps)</text>
</svg>
</body></html>
